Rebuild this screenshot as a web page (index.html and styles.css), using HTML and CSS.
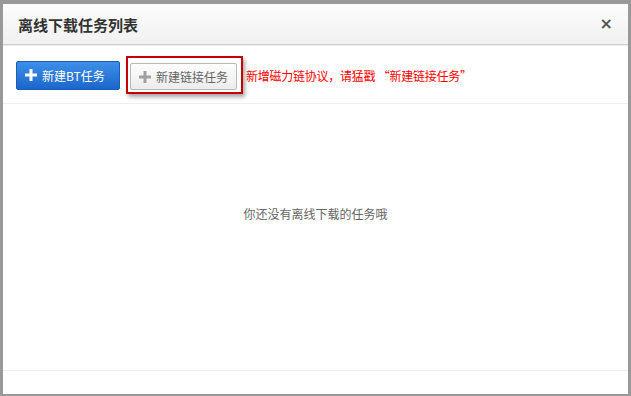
FILE: index.html
```html
<!DOCTYPE html>
<html>
<head>
<meta charset="utf-8">
<link rel="stylesheet" href="styles.css">
</head>
<body>
<div class="dialog">
  <div class="header">
    <span class="title">离线下载任务列表</span>
    <span class="close">×</span>
  </div>
  <div class="toolbar">
    <button class="btn btn-blue"><svg class="plus" width="12" height="12" viewBox="0 0 12 12"><rect x="4.5" y="0" width="3" height="12" fill="#fff"/><rect x="0" y="4.5" width="12" height="3" fill="#fff"/></svg>新建BT任务</button>
    <div class="highlight">
      <button class="btn btn-gray"><svg class="plus" width="12" height="12" viewBox="0 0 12 12"><rect x="4.5" y="0" width="3" height="12" fill="#a0a0a0"/><rect x="0" y="4.5" width="12" height="3" fill="#a0a0a0"/></svg>新建链接任务</button>
    </div>
    <span class="notice">新增磁力链协议，请猛戳 “新建链接任务”</span>
  </div>
  <div class="content">
    <p class="empty">你还没有离线下载的任务哦</p>
  </div>
  <div class="footer"></div>
</div>
</body>
</html>
```

FILE: styles.css
```css
* { box-sizing: border-box; }
html, body { margin: 0; padding: 0; }
body {
  width: 631px;
  height: 396px;
  font-family: "Noto Sans CJK SC", "Liberation Sans", sans-serif;
  font-size: 12px;
  background: #fff;
}
.dialog {
  width: 631px;
  height: 396px;
  border-style: solid;
  border-color: #999;
  border-width: 4px 3px 2px 3px;
  display: flex;
  flex-direction: column;
  background: #fff;
}
.header {
  height: 41px;
  flex: none;
  display: flex;
  align-items: center;
  justify-content: space-between;
  padding: 0 15px 0 15px;
  background: linear-gradient(#fcfcfc, #f1f1f1);
  border-bottom: 1px solid #cfcfcf;
  box-shadow: 0 1px 0 #ececec;
}
.title {
  font-size: 15px;
  font-weight: bold;
  color: #333;
}
.close {
  font-family: "DejaVu Sans", sans-serif;
  font-size: 16px;
  font-weight: bold;
  color: #555;
  line-height: 1;
}
.toolbar {
  height: 59px;
  flex: none;
  display: flex;
  align-items: center;
  padding: 2px 0 0 13px;
  border-bottom: 1px solid #efefef;
}
.btn {
  height: 28px;
  display: flex;
  align-items: center;
  gap: 5px;
  font-family: "Noto Sans CJK SC", "Liberation Sans", sans-serif;
  font-size: 12px;
  border-radius: 2px;
  cursor: pointer;
  padding: 0 0 0 8px;
}
.btn-blue {
  width: 104px;
  height: 29px;
  color: #fff;
  background: linear-gradient(#3d8fe8, #1b66cc);
  border: 1px solid #1c5db4;
}
.highlight {
  margin-left: 6px;
  border: 2px solid #c40000;
  padding: 5px 4px 2px 2px;
  box-shadow: 2px 3px 4px rgba(0,0,0,0.35);
}
.btn-gray {
  width: 107px;
  height: 27px;
  color: #666;
  background: linear-gradient(#fdfdfd, #ececec);
  border: 1px solid #b8b8b8;
}
.notice {
  margin-left: 3px;
  color: #f00;
  font-size: 12px;
  letter-spacing: -0.25px;
  white-space: nowrap;
}
.content {
  flex: 1;
  display: flex;
  justify-content: center;
  border-bottom: 1px solid #efefef;
}
.empty {
  margin: 101px 0 0 0;
  color: #666;
  font-size: 12px;
}
.footer {
  height: 23px;
  flex: none;
}
```
